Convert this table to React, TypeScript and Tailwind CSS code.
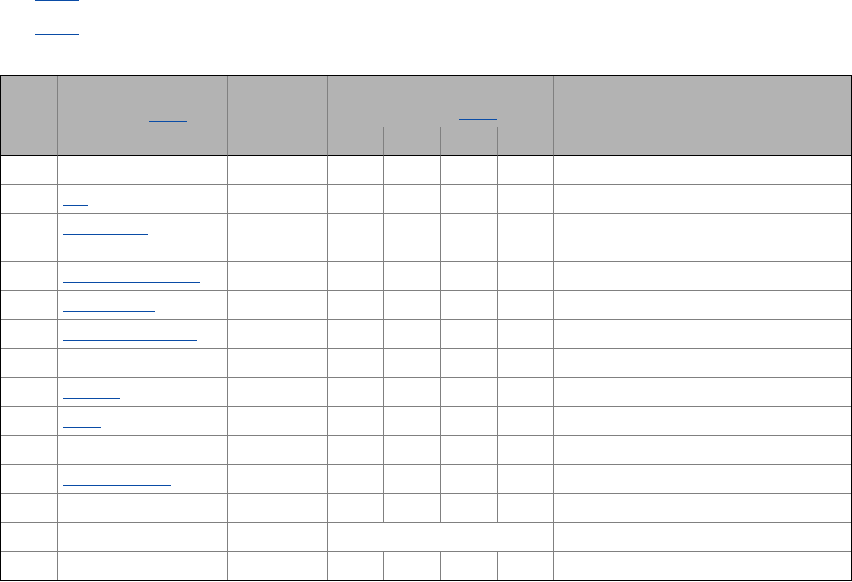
import React from "react";

type Row = {
  pos: string;
  club: string;
  w?: number; // width of the linked name
  more?: string; // second line under the name
  city: string;
  stats?: [string, string, string, string];
  note: string;
  tall?: boolean;
};

const ROWS: Row[] = [
  { pos: "1", club: "Unión Deportiva", city: "Valencia", stats: ["18", "6", "4", "60"], note: "Champions" },
  { pos: "2", club: "Ajax", w: 25, city: "Amsterdam", stats: ["17", "5", "6", "56"], note: "" },
  { pos: "3", club: "Sporting Lisboa", w: 85, more: "(reserve team)", city: "Lisbon", stats: ["15", "8", "5", "53"], note: "", tall: true },
  { pos: "4", club: "Olympique Lyonnais FC", w: 137, city: "Lyon", stats: ["14", "7", "7", "49"], note: "" },
  { pos: "5", club: "Borussia Dortm", w: 92, city: "Dortmund", stats: ["13", "8", "7", "47"], note: "" },
  { pos: "6", club: "Racing Club Strasbourg", w: 134, city: "Strasbourg", stats: ["12", "9", "7", "45"], note: "" },
  { pos: "7", club: "Sporting Gijón", city: "Gijón", stats: ["12", "6", "10", "42"], note: "" },
  { pos: "8", club: "Feyenoord", w: 57, city: "Rotterdam", stats: ["11", "7", "10", "40"], note: "" },
  { pos: "9", club: "Celtic FC", w: 38, city: "Glasgow", stats: ["10", "8", "10", "38"], note: "" },
  { pos: "10", club: "Dinamo Zagreb", city: "Zagreb", stats: ["9", "8", "11", "35"], note: "" },
  { pos: "11", club: "Red Star Belgrade", w: 108, city: "Belgrade", stats: ["8", "7", "13", "31"], note: "" },
  { pos: "12", club: "Rapid Wien", city: "Vienna", stats: ["6", "8", "14", "26"], note: "Relegated" },
  { pos: "13", club: "Slavia Praha", city: "Prague", note: "Relegated" },
  { pos: "14", club: "Legia Warszawa", city: "Warsaw", stats: ["3", "5", "20", "14"], note: "Relegated" },
];

const link =
  "block overflow-hidden whitespace-nowrap underline decoration-1 decoration-[#0a4ca6] [text-decoration-skip-ink:none] text-transparent";

function Cell({ last, lastRow, children, className = "", span }: { last?: boolean; lastRow?: boolean; children?: React.ReactNode; className?: string; span?: number }) {
  return (
    <td
      colSpan={span}
      className={`px-[5px] align-middle overflow-hidden whitespace-nowrap ${last ? "" : "border-r"} ${lastRow ? "" : "border-b"} border-[#808080] ${className}`}
    >
      {children}
    </td>
  );
}

export default function App() {
  return (
    <div className="w-[852px] h-[582px] overflow-hidden bg-white text-[14px] leading-[19px] text-transparent font-['Liberation_Sans',Arial,sans-serif]">
      {/* see-also links, cut at the top */}
      <ul className="-mt-[15px] pl-[35px] space-y-[15px]">
        <li>
          <a href="#" className={`${link} w-[44px]`}>Season</a>
        </li>
        <li>
          <a href="#" className={`${link} w-[44px]`}>Results</a>
        </li>
      </ul>

      <table className="mt-[37px] w-[852px] table-fixed border border-black border-separate border-spacing-0">
        <colgroup>
          <col className="w-[57px]" />
          <col className="w-[170px]" />
          <col className="w-[100px]" />
          <col className="w-[56px]" />
          <col className="w-[57px]" />
          <col className="w-[57px]" />
          <col className="w-[56px]" />
          <col className="w-[297px]" />
        </colgroup>
        <thead className="bg-[#b3b3b3]">
          <tr>
            <th rowSpan={2} className="border-r border-b border-r-[#808080] border-b-black">Pos</th>
            <th rowSpan={2} className="border-r border-b border-r-[#808080] border-b-black px-[5px] align-middle whitespace-nowrap">
              <span className="inline-block w-[50px] text-left align-top">Club</span>
              <a href="#" className={`${link} inline-block w-[38px] align-top`}>Notes</a>
            </th>
            <th rowSpan={2} className="border-r border-b border-r-[#808080] border-b-black">City</th>
            <th colSpan={4} className="h-[51px] border-r border-[#808080] align-bottom pb-[4px] whitespace-nowrap">
              <span className="inline-block w-[74px] text-left align-top">Record</span>
              <a href="#" className={`${link} inline-block w-[38px] align-top`}>Tables</a>
            </th>
            <th rowSpan={2} className="border-b border-b-black">Notes</th>
          </tr>
          <tr>
            {["W", "D", "L", "Pts"].map((s) => (
              <th key={s} className="h-[29px] border-r border-b border-r-[#808080] border-b-black font-bold">
                {s}
              </th>
            ))}
          </tr>
        </thead>
        <tbody>
          {ROWS.map((r, i) => {
            const lastRow = i === ROWS.length - 1;
            const h = r.tall ? "h-[48px]" : lastRow ? "h-[28px]" : "h-[29px]";
            return (
              <tr key={r.pos}>
                <Cell lastRow={lastRow} className={`${h} text-center`}>{r.pos}</Cell>
                <Cell lastRow={lastRow}>
                  {r.w ? (
                    <a href="#" className={link} style={{ width: r.w }}>
                      {r.club}
                    </a>
                  ) : (
                    <span className="block">{r.club}</span>
                  )}
                  {r.more && <span className="block">{r.more}</span>}
                </Cell>
                <Cell lastRow={lastRow}>{r.city}</Cell>
                {r.stats ? (
                  r.stats.map((s, j) => (
                    <Cell key={j} lastRow={lastRow} className="text-center">
                      {s}
                    </Cell>
                  ))
                ) : (
                  <Cell span={4} lastRow={lastRow} className="text-center">
                    Withdrew
                  </Cell>
                )}
                <Cell last lastRow={lastRow}>{r.note}</Cell>
              </tr>
            );
          })}
        </tbody>
      </table>
    </div>
  );
}
